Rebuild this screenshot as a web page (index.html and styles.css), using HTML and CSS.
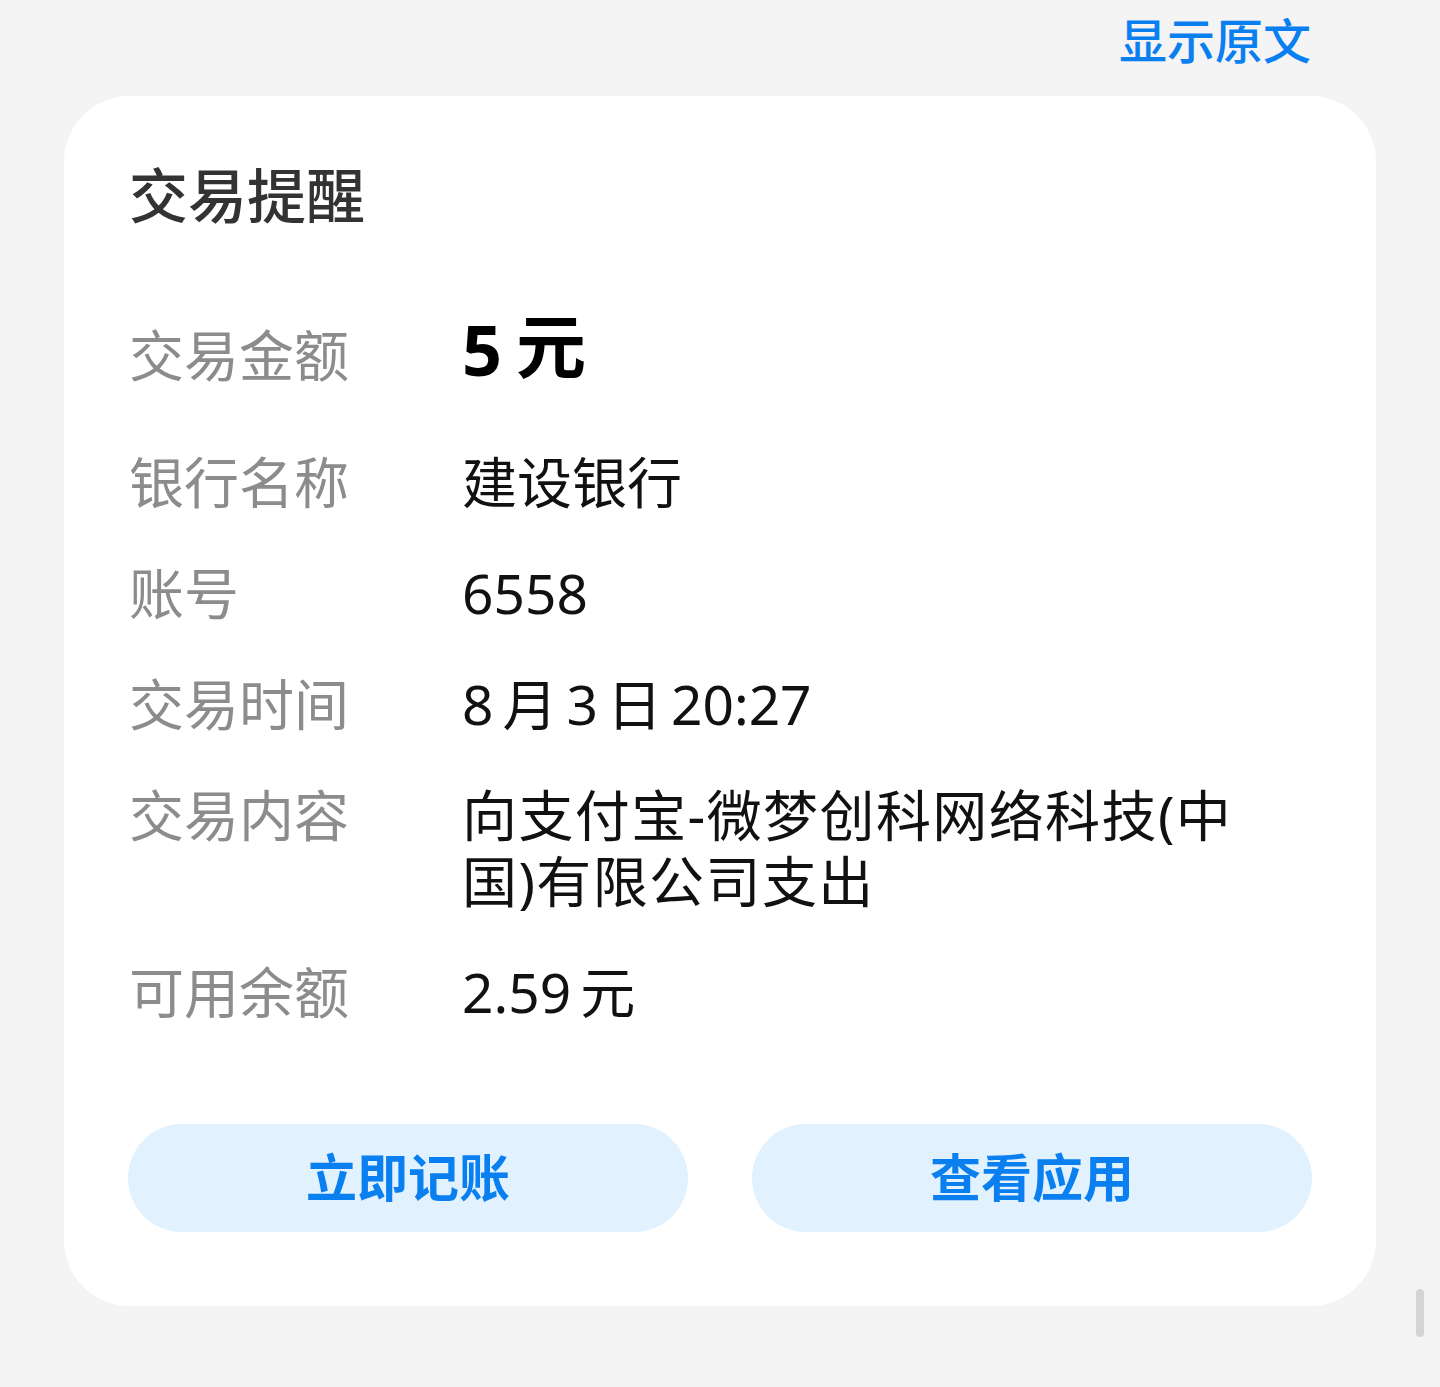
FILE: index.html
```html
<!DOCTYPE html>
<html lang="zh-CN">

<head>
  <meta charset="UTF-8">
  <meta name="viewport" content="width=device-width, initial-scale=1.0">
  <title>交易提醒</title>
  <link rel="stylesheet" href="styles.css">
</head>

<body>
  <div class="top-bar">
    <a class="show-origin">显示原文</a>
  </div>

  <div class="card">
    <div class="card-title">交易提醒</div>

    <div class="info-list">
      <div class="info-row first">
        <div class="label">交易金额</div>
        <div class="value amount">5<span class="unit">元</span></div>
      </div>
      <div class="info-row">
        <div class="label">银行名称</div>
        <div class="value">建设银行</div>
      </div>
      <div class="info-row">
        <div class="label">账号</div>
        <div class="value">6558</div>
      </div>
      <div class="info-row">
        <div class="label">交易时间</div>
        <div class="value">8<span class="gap"></span>月<span class="gap"></span>3<span class="gap"></span>日<span class="gap"></span>20:27</div>
      </div>
      <div class="info-row">
        <div class="label">交易内容</div>
        <div class="value wide">向支付宝-微梦创科网络科技(中国)有限公司支出</div>
      </div>
      <div class="info-row">
        <div class="label">可用余额</div>
        <div class="value">2.59<span class="gap"></span>元</div>
      </div>
    </div>

    <div class="actions">
      <div class="btn">立即记账</div>
      <div class="btn">查看应用</div>
    </div>
  </div>

  <div class="scroll-thumb"></div>
</body>

</html>
```

FILE: styles.css
```css
body {
  margin: 0;
  background: #f4f4f4;
  font-family: "Noto Sans", "Noto Sans CJK SC", sans-serif;
  position: relative;
  min-height: 1387px;
}

.top-bar {
  display: flex;
  justify-content: flex-end;
  padding: 13px 129px 27px 0;
}

.show-origin {
  font-size: 48px;
  line-height: 56px;
  font-weight: 500;
  color: #0a80f0;
  cursor: pointer;
}

.card {
  margin: 0 64px;
  background: #fff;
  border-radius: 66px;
  padding: 64px 64px 74px 64px;
}

.card-title {
  padding-left: 1px;
  font-size: 59px;
  line-height: 70px;
  font-weight: 500;
  color: #333;
}

.info-list {
  display: flex;
  flex-direction: column;
  gap: 45px;
  margin-top: 86px;
  padding: 0 48px 0 1px;
}

.info-row {
  display: flex;
  align-items: baseline;
}

.info-row.first {
  margin-bottom: 22px;
  height: 66px;
}

.label {
  flex: 0 0 333px;
  font-size: 55px;
  line-height: 66px;
  color: #8c8c8c;
}

.value {
  flex: 1;
  font-size: 55px;
  line-height: 66px;
  color: #111;
}

.value.wide {
  letter-spacing: 1.4px;
}

.value .gap {
  display: inline-block;
  width: 9px;
}

.value.amount {
  font-size: 70px;
  font-weight: 700;
  color: #000;
}

.value.amount .unit {
  margin-left: 14px;
  position: relative;
  top: -3px;
}

.actions {
  display: flex;
  gap: 64px;
  margin-top: 99px;
}

.btn {
  flex: 1;
  height: 102px;
  padding-bottom: 6px;
  border-radius: 54px;
  background: #e1f1fe;
  color: #0a7ff0;
  font-size: 51px;
  font-weight: 700;
  display: flex;
  align-items: center;
  justify-content: center;
  cursor: pointer;
}

.scroll-thumb {
  position: absolute;
  left: 1416px;
  top: 1289px;
  width: 8px;
  height: 48px;
  border-radius: 4px;
  background: #d4d4d4;
}
```
